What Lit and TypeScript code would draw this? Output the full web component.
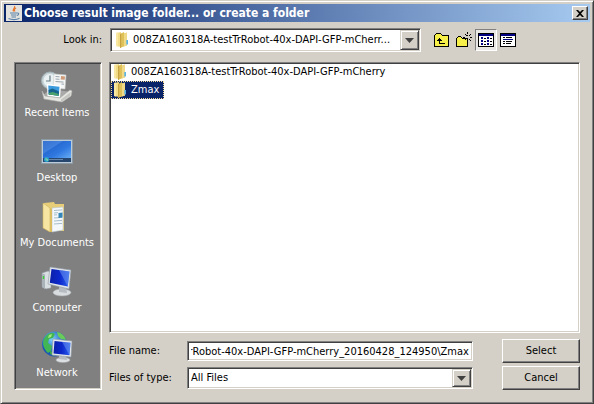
import { LitElement, html, css, svg } from "lit";
import { customElement, property, query, state } from "lit/decorators.js";
import { classMap } from "lit/directives/class-map.js";

const folderIcon = html`<svg class="folder" width="16" height="18" viewBox="0 0 16 18" aria-hidden="true">
  <path d="M8 3l5-1.500v13L8 16z" fill="#e9cf78" />
  <path d="M2 2l5-1v15l-5-1z" fill="#f3dc88" />
  <path d="M2 2l2-.4V15.400L2 15z" fill="#f8e8a4" />
  <path d="M6 3l4-2v14l-4 2z" fill="#dfc15a" />
  <path d="M6 3l1.200-.6v14L6 17z" fill="#c7a343" />
  <path d="M10 2.500l3-.7v12.700l-3 1z" fill="#f0d987" />
  <path d="M12.300 9H14v4.500h-1.700z" fill="#5db4e0" />
</svg>`;

const javaIcon = html`<svg width="16" height="16" viewBox="0 0 16 16" aria-hidden="true">
  <rect width="16" height="16" fill="#e4e2df" />
  <path d="M8.500 1c1.500 2-2.800 3-1 5.500M10 3c-1.800 1-2 2-1 3.500" fill="none" stroke="#e8762c" stroke-width="1.200" />
  <path d="M4 8h7M5 10h5.500M5.500 12h4.500M11 8c2.500-.5 2 2 0 2.500M2.500 13.500c3 1.500 8 1.500 11-.3" fill="none" stroke="#5a82a8" stroke-width="1.100" />
</svg>`;

const paints = svg`<defs>
  <linearGradient id="deskfill" x2="1" y2="1">
    <stop stop-color="#1a56c0" />
    <stop offset=".6" stop-color="#2f78e0" />
    <stop offset="1" stop-color="#6cb0f6" />
  </linearGradient>
  <linearGradient id="screenfill" x2="1">
    <stop stop-color="#0a1fa8" />
    <stop offset=".5" stop-color="#0c28cc" />
    <stop offset="1" stop-color="#2d62ee" />
  </linearGradient>
  <radialGradient id="globefill" cx=".4" cy=".3">
    <stop stop-color="#7fd0ff" />
    <stop offset="1" stop-color="#1a56b4" />
  </radialGradient>
</defs>`;

const placeIcons: Record<string, unknown> = {
  recent: svg`
    <path d="M2 24l8-6 20 3-7 9z" fill="#a9aaa8" />
    <circle cx="9" cy="9.500" r="8.500" fill="#c6d2d6" stroke="#9fb0b4" />
    <circle cx="9" cy="9.500" r="6.500" fill="#eaf1f3" />
    <path d="M9 4.500V10H5" fill="none" stroke="#667c84" stroke-width="1.200" />
    <path d="M13 3l12 1-1 14-12-1z" fill="#f5f6f6" stroke="#c9cccd" stroke-width=".6" />
    <path d="M14.500 5.500l4 .3M14.500 8l4 .3M14.500 10.500l8 .6M20.500 13l2.500.2" stroke="#98a4ac" />
    <path d="M20 5l4 .4-.3 3.400-4-.3z" fill="#cf9b78" />
    <path d="M6 13l14 1.500-1 12L6.500 25z" fill="#fff" />
    <path d="M7.200 14.500l11.300 1.200-.7 9-10-1.200z" fill="#3b9bdc" />
    <path d="M7.500 19l4-1.500 6.500 3-.3 4.200-10-1.200z" fill="#17628f" />
    <path d="M7.700 22l4-1 6 2v1.800l-10-1.300z" fill="#4ba26a" />
    <path d="M1 20l3 5 15 2 10-8 2 1-1 5-9 6L3 28z" fill="#e6e6e3" stroke="#b4b4b0" stroke-width=".6" />
    <path d="M20 28.500V31l9-6 .8-4z" fill="#c5c5c1" />`,
  desktop: svg`
    <rect x="0.500" y="3.500" width="31" height="24" fill="#bccbd8" stroke="#8b9aa5" />
    <rect x="2" y="5" width="28" height="18" fill="url(#deskfill)" />
    <path d="M2 5h20L2 18z" fill="#7db4f4" opacity=".3" />
    <rect x="2" y="22" width="28" height="4" fill="#27476e" />
    <path d="M8 23.500h14" stroke="#6586a8" />
    <circle cx="5.500" cy="23.500" r="2.500" fill="#2aa3cf" />
    <path d="M4.500 22.500h1v1h-1zM5.500 23.500h1.500v1H5.500z" fill="#c8ef7d" />`,
  documents: svg`
    <path d="M3 2l10-1 1 2h9v27H8z" fill="#e7cd78" />
    <path d="M11 7l11-1v23l-11 2z" fill="#f5f8fa" stroke="#b7c4cc" stroke-width=".6" />
    <path d="M13 9.500l8-.6M13 12l4-.3M13 14l3-.2M13 17l8-.6M13 20l8-.6M13 23l8-.6" stroke="#9bb5c4" stroke-width=".9" />
    <path d="M17.500 12l4-.4v5l-4 .4z" fill="#3485b8" />
    <path d="M2 2l7 5v24l-7-4z" fill="#f7e5a2" stroke="#cdb15c" stroke-width=".6" />
    <path d="M9 7l2 1v23H9z" fill="#dcbd62" />`,
  computer: svg`
    <ellipse cx="21" cy="26.500" rx="9" ry="3.500" fill="#d9dde0" stroke="#a6abae" stroke-width=".6" />
    <path d="M1 7l6-2 3 1v16l-5 1-4-2z" fill="#d9dee2" stroke="#8d969c" stroke-width=".6" />
    <path d="M1 7l3 1.500V23l-3-2z" fill="#aab3b9" />
    <path d="M2.500 10v3" stroke="#3bd13b" stroke-width="1.500" />
    <path d="M18 20l7 1 1 6-8-1z" fill="#b5bbc0" />
    <path d="M9 1l21 3-2 19L7 18z" fill="#dfe5ea" stroke="#909aa2" stroke-width=".6" />
    <path d="M10.500 3l18 2.500-1.700 15L8.800 16.800z" fill="url(#screenfill)" />
    <path d="M18 4l10.500 1.500-1.700 15z" fill="#7aa4f5" opacity=".45" />`,
  network: svg`
    <circle cx="13.500" cy="13" r="12.500" fill="url(#globefill)" />
    <path d="M4 6C8 1 12 1 14 3l-2 4-4 1-1 4 4 3-1 5-3 2C3 18 0 12 4 6z" fill="#42b655" />
    <path d="M16 1c5 1 8 4 9 8l-5-1-3-3z" fill="#69cc58" />
    <path d="M8 4l3-1-1 3-3 1z" fill="#a6e87a" />
    <path d="M9 20l4 1v4l-4-2z" fill="#3aa54b" />
    <ellipse cx="22" cy="29" rx="7" ry="2.600" fill="#dde0e2" stroke="#a6abae" stroke-width=".6" />
    <path d="M18 24l7 1 1 4-8-1z" fill="#b5bbc0" />
    <path d="M12 8l19 2-1 16-19-2z" fill="#e3e8ec" stroke="#909aa2" stroke-width=".6" />
    <path d="M13.500 10l16 1.700-1 12.600-16-1.800z" fill="url(#screenfill)" />
    <path d="M21 10.800l8.500.9-1 12.600z" fill="#7aa4f5" opacity=".45" />`,
};

const toolIcons: Record<string, unknown> = {
  up: svg`
    <path d="M0.500 14.500v-11l2-2h4l2 2h6v11z" fill="#f7f04a" stroke="#000" />
    <path d="M5.500 6v5.500H11M3 8.500h5M4 7.500h3" fill="none" stroke="#000" />`,
  create: svg`
    <path d="M0.500 14.500v-8l2-2h2l2 2h5v8z" fill="#f7f04a" stroke="#000" />
    <path d="M11 0h1v2h-1zM11 3h1v1h-1zM11 7h1v1h-1zM11 9h1v2h-1zM7 5h2v1H7zM14 5h2v1h-2zM9 2h1v1H9zM10 3h1v1h-1zM14 2h1v1h-1zM13 3h1v1h-1zM13 7h1v1h-1zM14 8h1v1h-1zM9 7h1v1H9z" fill="#000" />`,
  list: svg`
    <rect x="0.500" y="1.500" width="15" height="13" fill="#fff" stroke="#000" />
    <path d="M1 3h14" stroke="#000080" stroke-width="2" />
    <path d="M3 5h2v2H3zM9 5h2v2H9zM3 8h2v2H3zM9 8h2v2H9zM3 11h2v2H3zM9 11h2v2H9z" fill="#000080" />
    <path d="M6 6.500h2M12 6.500h2M6 9.500h2M12 9.500h2M6 12.500h2M12 12.500h2" stroke="#000" />`,
  details: svg`
    <rect x="0.500" y="1.500" width="15" height="13" fill="#fff" stroke="#000" />
    <path d="M1 3h14" stroke="#000080" stroke-width="2" />
    <path d="M3 5.500h2M6 5.500h6M3 9.500h2M6 9.500h6M3 11.500h2M6 11.500h5" stroke="#000" />
    <path d="M3 7.500h10" stroke="#000080" />`,
};

const arrow = html`<svg viewBox="0 0 9 5" width="9" height="5" aria-hidden="true">
  <path d="M0 0h9L4.500 5z" fill="#404040" />
</svg>`;

const shared = css`
  * {
    box-sizing: border-box;
  }
  button,
  input,
  select {
    font: inherit;
    color: inherit;
    margin: 0;
    border-radius: 0;
  }
  svg {
    display: block;
    flex: none;
  }
  .sunken {
    border: 1px solid;
    border-color: #808080 #fff #fff #808080;
    box-shadow: inset 1px 1px #404040, inset -1px -1px #d4d0c8;
  }
`;

@customElement("drop-down")
class DropDown extends LitElement {
  @property() name = "";
  @property() text = "";
  @property({ type: Boolean }) folder = false;

  static styles = [
    shared,
    css`
      :host {
        display: block;
        min-width: 0;
      }
      .box {
        display: flex;
        align-items: center;
        height: 100%;
        padding: 1px;
        background: #fff;
      }
      .folder {
        margin-left: 2px;
      }
      select {
        flex: 1;
        min-width: 0;
        height: 100%;
        appearance: none;
        border: 0;
        outline: 0;
        padding: 0 0 0 2px;
        background: transparent;
      }
      .with-folder select {
        padding-left: 3px;
      }
      .knob {
        display: grid;
        place-items: center;
        align-self: stretch;
        width: 19px;
        background: #d4d0c8;
        border: 1px solid;
        border-color: #d4d0c8 #404040 #404040 #d4d0c8;
        box-shadow: inset 1px 1px #fff, inset -1px -1px #808080;
        pointer-events: none;
      }
    `,
  ];

  render() {
    return html`<div class=${classMap({ box: true, sunken: true, "with-folder": this.folder })}>
      ${this.folder ? folderIcon : ""}
      <select aria-label=${this.name}>
        <option>${this.text}</option>
      </select>
      <span class="knob">${arrow}</span>
    </div>`;
  }
}

@customElement("app-root")
class AppRoot extends LitElement {
  @state() view = "list";
  @state() selected = 1;
  @query(".filename") field!: HTMLInputElement;

  places = [
    ["recent", "Recent Items"],
    ["desktop", "Desktop"],
    ["documents", "My Documents"],
    ["computer", "Computer"],
    ["network", "Network"],
  ];
  tools = [
    ["up", "Up One Level"],
    ["create", "Create New Folder"],
    ["list", "List"],
    ["details", "Details"],
  ];
  files = ["008ZA160318A-testTrRobot-40x-DAPI-GFP-mCherry", "Zmax"];

  static styles = [
    shared,
    css`
      :host {
        display: block;
        font: 11px/14px "DejaVu Sans Condensed", "Noto Sans", sans-serif;
        color: #000;
      }
      .paints {
        position: absolute;
      }
      .window {
        display: flex;
        flex-direction: column;
        min-height: 100vh;
        padding: 3px;
        background: #d4d0c8;
        border: 1px solid;
        border-color: #d4d0c8 #404040 #404040 #d4d0c8;
        box-shadow: inset 1px 1px #fff, inset -1px -1px #808080;
      }
      .title {
        display: flex;
        align-items: center;
        gap: 2px;
        height: 18px;
        padding: 0 2px;
        color: #fff;
        background: linear-gradient(90deg, #0a246a, #a6caf0);
      }
      h1 {
        flex: 1;
        margin: 0;
        font-size: 12px;
        font-weight: 700;
        white-space: nowrap;
      }
      .raised {
        display: grid;
        place-items: center;
        padding: 0;
        background: #d4d0c8;
        border: 1px solid;
        border-color: #fff #404040 #404040 #fff;
        box-shadow: inset -1px -1px #808080;
      }
      .close {
        width: 16px;
        height: 14px;
        color: #000;
      }
      .content {
        flex: 1;
        display: grid;
        grid-template-columns: 88px minmax(0, 1fr);
        grid-template-rows: 24px 1fr;
        gap: 10px 7px;
        padding: 6px 10px 10px;
      }
      .lookin {
        align-self: center;
        text-align: right;
      }
      .bar {
        display: flex;
        align-items: center;
        padding-left: 1px;
      }
      .bar drop-down {
        flex: 0 1 311px;
        height: 24px;
      }
      .tools {
        display: flex;
        padding-left: 10px;
      }
      .tool {
        display: grid;
        place-items: center;
        width: 22px;
        height: 22px;
        padding: 0;
        background: none;
        border: 1px solid transparent;
      }
      .tool.on {
        background: #eae8e4;
        border-color: #808080 #fff #fff #808080;
      }
      .places {
        display: flex;
        flex-direction: column;
        gap: 16px;
        padding: 8px 2px 0 0;
        background: #808080;
      }
      .place {
        display: flex;
        flex-direction: column;
        align-items: center;
        gap: 3px;
        padding: 0;
        border: 0;
        background: none;
        color: #fff;
        white-space: nowrap;
      }
      .main {
        display: flex;
        flex-direction: column;
        gap: 6px;
      }
      .files {
        flex: 1;
        margin: 0;
        padding: 0 1px;
        list-style: none;
        background: #fff;
      }
      .file {
        display: flex;
        align-items: center;
        gap: 3px;
        width: max-content;
        height: 18px;
        padding-right: 4px;
        border: 1px dotted transparent;
      }
      .file.on {
        color: #fff;
        background: #0a246a;
        border-color: #f5db95;
      }
      .form {
        display: grid;
        grid-template-columns: 78px minmax(0, 1fr) 78px;
        grid-template-rows: 24px 24px;
        gap: 3px 0;
        align-items: center;
      }
      .form drop-down {
        height: 22px;
      }
      .filename {
        display: block;
        width: 100%;
        height: 20px;
        padding: 1px 3px;
        outline: 0;
        background: #fff;
      }
      .field {
        padding-right: 29px;
      }
      .action {
        height: 24px;
      }
    `,
  ];

  async firstUpdated() {
    await document.fonts.ready;
    this.field.scrollLeft = this.field.scrollWidth;
  }

  render() {
    return html`
      <svg class="paints" width="0" height="0" aria-hidden="true">${paints}</svg>
      <main class="window">
        <header class="title">
          ${javaIcon}
          <h1>Choose result image folder... or create a folder</h1>
          <button class="raised close" aria-label="Close">
            <svg width="8" height="7" viewBox="0 0 8 7">
              <path d="M0 0h2l2 2 2-2h2L5 3.500 8 7H6L4 5 2 7H0l3-3.500z" fill="#000" />
            </svg>
          </button>
        </header>
        <div class="content">
          <span class="lookin">Look in:</span>
          <div class="bar">
            <drop-down folder name="Look in" text="008ZA160318A-testTrRobot-40x-DAPI-GFP-mCherr..."></drop-down>
            <div class="tools">
              ${this.tools.map(
                ([id, label]) => html`<button
                  class=${classMap({ tool: true, on: this.view === id })}
                  aria-label=${label}
                  @click=${() => (this.view = id)}
                >
                  <svg width="16" height="16" viewBox="0 0 16 16" shape-rendering="crispEdges">${toolIcons[id]}</svg>
                </button>`
              )}
            </div>
          </div>
          <nav class="places sunken">
            ${this.places.map(
              ([id, label]) => html`<button class="place">
                <svg width="32" height="32" viewBox="0 0 32 32" aria-hidden="true">${placeIcons[id]}</svg>
                ${label}
              </button>`
            )}
          </nav>
          <div class="main">
            <ul class="files sunken" role="listbox" aria-label="Folders">
              ${this.files.map(
                (name, i) => html`<li
                  class=${classMap({ file: true, on: this.selected === i })}
                  role="option"
                  aria-selected=${this.selected === i}
                  @click=${() => (this.selected = i)}
                >
                  ${folderIcon}<span>${name}</span>
                </li>`
              )}
            </ul>
            <div class="form">
              <label for="filename">File name:</label>
              <div class="field">
                <input
                  id="filename"
                  class="filename sunken"
                  value="testTrRobot-40x-DAPI-GFP-mCherry_20160428_124950\\Zmax"
                />
              </div>
              <button class="raised action">Select</button>
              <span>Files of type:</span>
              <div class="field"><drop-down name="Files of type" text="All Files"></drop-down></div>
              <button class="raised action">Cancel</button>
            </div>
          </div>
        </div>
      </main>
    `;
  }
}
